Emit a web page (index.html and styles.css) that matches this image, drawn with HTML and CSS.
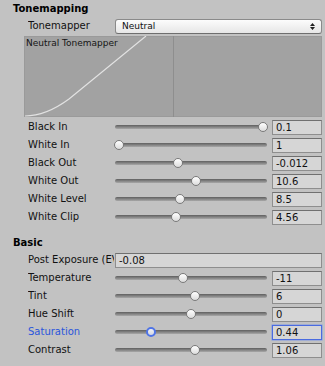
FILE: index.html
```html
<!DOCTYPE html>
<html>
<head>
<meta charset="utf-8">
<link rel="stylesheet" href="styles.css">
</head>
<body>
<div class="inspector">
  <section class="group">
    <div class="group-title">Tonemapping</div>
    <div class="row row-wide">
      <div class="label">Tonemapper</div>
      <div class="popup">
        <span class="popup-text">Neutral</span>
        <svg class="popup-arrows" width="5" height="7" viewBox="0 0 5 7"><path d="M0 3 L2.5 0 L5 3 Z M0 4 L2.5 7 L5 4 Z" fill="#222"/></svg>
      </div>
    </div>
    <div class="curve">
      <span class="curve-title">Neutral Tonemapper</span>
      <svg class="curve-svg" width="298" height="81" viewBox="0 0 298 81">
        <line x1="149.5" y1="0" x2="149.5" y2="81" stroke="#8e8e8e" stroke-width="1"/>
        <path d="M1 80 C 15 80 30 74 45 63 L 122 0" fill="none" stroke="#e2e2e2" stroke-width="1.2"/>
      </svg>
    </div>
    <div class="row"><div class="label">Black In</div><div class="slider"><div class="track"></div><div class="thumb" style="left:143px"></div></div><div class="field">0.1</div></div>
    <div class="row"><div class="label">White In</div><div class="slider"><div class="track"></div><div class="thumb" style="left:-1px"></div></div><div class="field">1</div></div>
    <div class="row"><div class="label">Black Out</div><div class="slider"><div class="track"></div><div class="thumb" style="left:58px"></div></div><div class="field">-0.012</div></div>
    <div class="row"><div class="label">White Out</div><div class="slider"><div class="track"></div><div class="thumb" style="left:76px"></div></div><div class="field">10.6</div></div>
    <div class="row"><div class="label">White Level</div><div class="slider"><div class="track"></div><div class="thumb" style="left:60px"></div></div><div class="field">8.5</div></div>
    <div class="row"><div class="label">White Clip</div><div class="slider"><div class="track"></div><div class="thumb" style="left:56px"></div></div><div class="field">4.56</div></div>
  </section>
  <section class="group group-basic">
    <div class="group-title">Basic</div>
    <div class="row row-wide">
      <div class="label label-clip">Post Exposure (EV)</div>
      <div class="field">-0.08</div>
    </div>
    <div class="row"><div class="label">Temperature</div><div class="slider"><div class="track"></div><div class="thumb" style="left:63px"></div></div><div class="field">-11</div></div>
    <div class="row"><div class="label">Tint</div><div class="slider"><div class="track"></div><div class="thumb" style="left:75px"></div></div><div class="field">6</div></div>
    <div class="row"><div class="label">Hue Shift</div><div class="slider"><div class="track"></div><div class="thumb" style="left:71px"></div></div><div class="field">0</div></div>
    <div class="row row-focus"><div class="label">Saturation</div><div class="slider"><div class="track"></div><div class="thumb" style="left:31px"></div></div><div class="field">0.44</div></div>
    <div class="row"><div class="label">Contrast</div><div class="slider"><div class="track"></div><div class="thumb" style="left:75px"></div></div><div class="field">1.06</div></div>
  </section>
</div>
</body>
</html>
```
FILE: styles.css
```css
html, body {
  margin: 0;
  padding: 0;
  background: #c2c2c2;
}
body {
  width: 325px;
  height: 366px;
  overflow: hidden;
  font-family: "DejaVu Sans", sans-serif;
  font-size: 10px;
  color: #111;
}
.inspector {
  padding: 0 3px 0 13px;
}
.group-title {
  font-weight: bold;
  line-height: 14px;
  padding-top: 2px;
  padding-bottom: 1px;
  color: #000;
}
.group-basic {
  margin-top: 8px;
}
.row {
  display: grid;
  grid-template-columns: 87px 1fr 50px;
  column-gap: 0;
  align-items: center;
  height: 18px;
  margin-left: 15px;
}
.row-wide {
  grid-template-columns: 87px 1fr;
}
.label {
  line-height: 18px;
  white-space: nowrap;
  overflow: hidden;
}
.label-clip {
  margin-right: 1px;
}
.row-focus .label {
  color: #2a56dc;
}
.popup {
  height: 15px;
  box-sizing: border-box;
  border: 1px solid #8a8a8a;
  border-bottom-color: #6e6e6e;
  border-radius: 3px;
  background: linear-gradient(#fcfcfc, #e6e6e6);
  display: flex;
  align-items: center;
  justify-content: space-between;
  padding: 0 6px 0 6px;
}
.popup-text {
  font-size: 9px;
  line-height: 13px;
}
.popup-arrows {
  display: block;
}
.curve {
  position: relative;
  margin: 1px 0 1px 11px;
  height: 81px;
  background: #a2a2a2;
  box-shadow: inset 0 0 0 1px #9a9a9a;
}
.curve-svg {
  display: block;
}
.curve-title {
  position: absolute;
  left: 2px;
  top: 1px;
  font-size: 9px;
  line-height: 12px;
  color: #151515;
}
.slider {
  position: relative;
  height: 18px;
  margin-right: 5px;
  display: flex;
  align-items: center;
}
.track {
  width: 100%;
  height: 4px;
  border-radius: 2px;
  background: linear-gradient(#5f5f5f, #8a8a8a 60%, #a8a8a8);
}
.thumb {
  position: absolute;
  top: 4px;
  width: 10px;
  height: 10px;
  box-sizing: border-box;
  border-radius: 50%;
  border: 1px solid #7a7a7a;
  background: linear-gradient(#ffffff, #dcdcdc);
}
.row-focus .thumb {
  border: 2px solid #4f74e6;
  background: linear-gradient(#f4f4f4, #d2d6e4);
}
.field {
  height: 15px;
  box-sizing: border-box;
  border: 1px solid #8e8e8e;
  border-top-color: #707070;
  background: #d6d6d6;
  padding-left: 3px;
  line-height: 13px;
  white-space: nowrap;
  overflow: hidden;
}
.row-focus .field {
  border-color: #4a6be0;
  box-shadow: 0 0 0 0.5px #7d95e8;
}
```
